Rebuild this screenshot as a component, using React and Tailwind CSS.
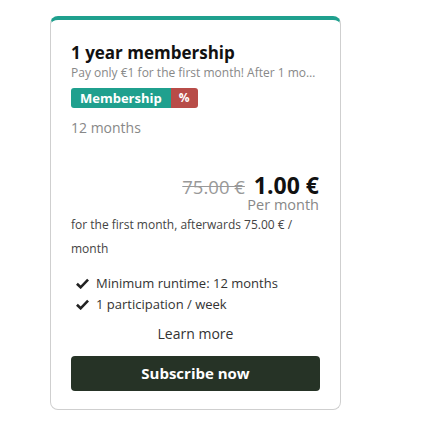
import React from 'react'

function Check() {
  return (
    <svg width="13" height="11" viewBox="0 0 14 11" className="shrink-0">
      <path d="M1 5.8 L5 9.6 L13 1.4" fill="none" stroke="#222" strokeWidth="2.8" strokeLinejoin="miter" />
    </svg>
  )
}

export default function App() {
  return (
    <div className="w-[428px] h-[446px] bg-white" style={{ fontFamily: '"Open Sans", sans-serif' }}>
      <div className="ml-[50px] mt-[16px] w-[291px] h-[394px] border border-[#cfcfcf] border-t-4 border-t-[#1fa08e] rounded-lg px-5 pt-[21px]">
        <h2 className="text-[17px] leading-[23px] font-bold text-[#111]">1 year membership</h2>
        <p className="text-[12px] leading-[16px] mt-[1px] text-[#888] truncate">Pay only €1 for the first month! After 1 month the price is 75.00 €</p>
        <div className="flex mt-[7px] h-[20px]">
          <span className="bg-[#1fa08e] text-white text-[13px] font-bold px-[9px] rounded-l-[3px] leading-[20px]">Membership</span>
          <span className="bg-[#b84c48] text-white text-[12px] font-bold px-[8px] rounded-r-[3px] leading-[20px]">%</span>
        </div>
        <div className="text-[14px] leading-[20px] mt-[10px] text-[#888]">12 months</div>

        {/* price block */}
        <div className="flex justify-end items-baseline gap-[9px] mt-[37px] pr-[1px]">
          <span className="text-[18.5px] leading-[20px] text-[#999] line-through">75.00 €</span>
          <span className="text-[23px] leading-[20px] font-bold text-[#111]">1.00 €</span>
        </div>
        <div className="text-right text-[14.5px] leading-[14px] mt-[1px] pr-[1px] text-[#888]">Per month</div>
        <p className="text-[12px] leading-[24px] mt-[1px] text-[#444]">for the first month, afterwards 75.00 € / month</p>

        <ul className="mt-[12px] text-[13px] leading-[21px] text-[#333]">
          <li className="flex items-center gap-[7px] pl-[5px]"><Check />Minimum runtime: 12 months</li>
          <li className="flex items-center gap-[7px] pl-[5px]"><Check />1 participation / week</li>
        </ul>

        <div className="text-center text-[14px] leading-[20px] text-[#333] mt-[9px]">Learn more</div>
        <button className="w-full h-[35px] mt-[12px] bg-[#263326] text-white text-[15px] font-bold rounded-[4px]">Subscribe now</button>
      </div>
    </div>
  )
}
